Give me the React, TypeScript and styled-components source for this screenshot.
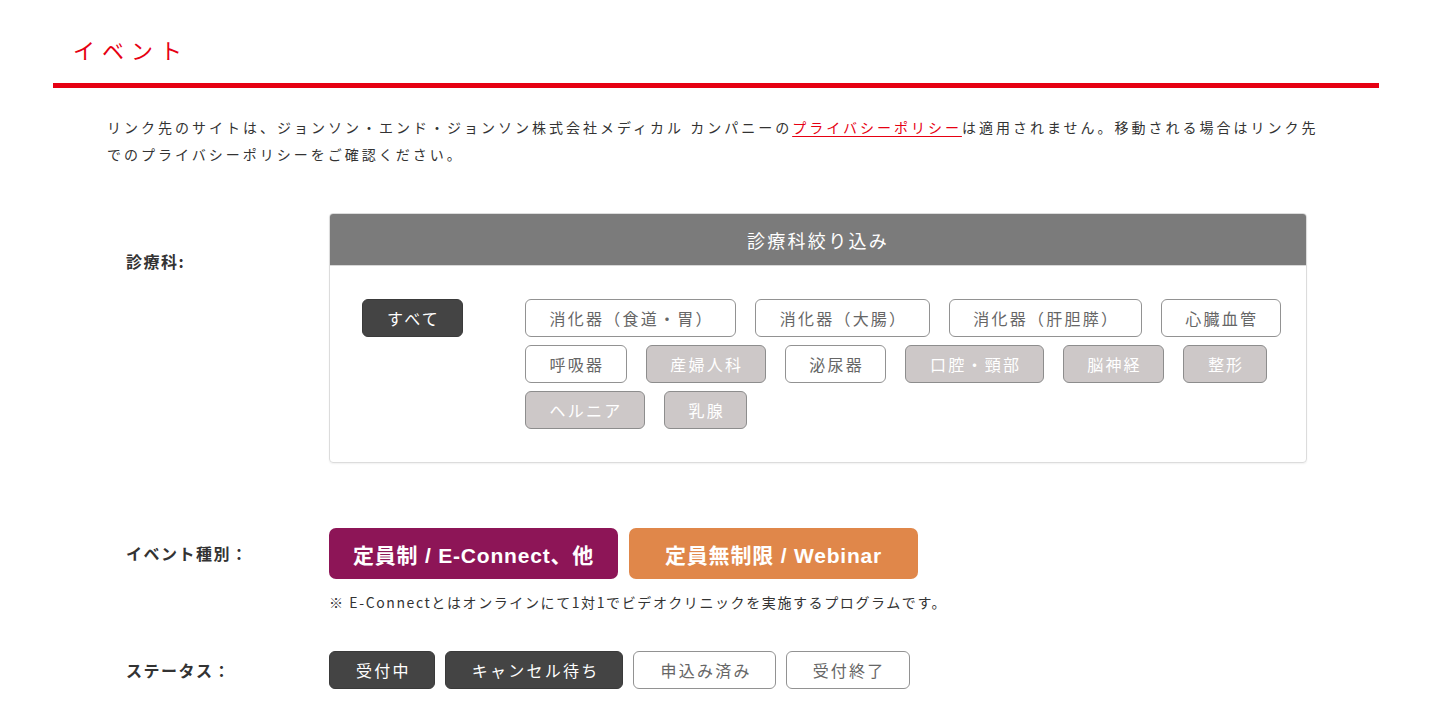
import React from "react";
import styled, { createGlobalStyle, css } from "styled-components";

const GlobalStyle = createGlobalStyle`
  html, body {
    margin: 0;
    padding: 0;
    background: #ffffff;
  }
  body {
    font-family: "Liberation Sans", "Noto Sans CJK JP", sans-serif;
    color: #333333;
  }
`;

const Page = styled.div`
  width: 1326px;
  margin-left: 53px;
  padding-bottom: 40px;
`;

const Title = styled.h1`
  margin: 0;
  padding: 33px 0 0 20px;
  font-family: "Noto Sans CJK JP", sans-serif;
  font-size: 22px;
  line-height: 32px;
  font-weight: 400;
  letter-spacing: 7px;
  color: #e60012;
`;

const RedRule = styled.div`
  margin-top: 18px;
  height: 5px;
  background: #e60012;
`;

const Notice = styled.p`
  margin: 26px 0 0;
  padding: 0 20px 0 54px;
  font-family: "Noto Sans CJK JP", sans-serif;
  font-size: 14px;
  line-height: 27px;
  letter-spacing: 3px;
  color: #333333;
  white-space: nowrap;
`;

const PolicyLink = styled.a`
  color: #e60012;
  text-decoration: underline;
  text-underline-offset: 3px;
`;

const FormRow = styled.div<{ $top: number }>`
  display: grid;
  grid-template-columns: 203px 1fr;
  padding-left: 73px;
  margin-top: ${(p) => p.$top}px;
`;

const RowLabel = styled.div<{ $lh: number; $pt?: number }>`
  font-family: "Noto Sans CJK JP", sans-serif;
  font-size: 16px;
  font-weight: 700;
  letter-spacing: 1.5px;
  color: #333333;
  line-height: ${(p) => p.$lh}px;
  padding-top: ${(p) => p.$pt ?? 0}px;
`;

const Panel = styled.div`
  width: 978px;
  box-sizing: border-box;
  border: 1px solid #dcdcdc;
  border-radius: 4px;
  overflow: hidden;
  box-shadow: 0 1px 2px rgba(0, 0, 0, 0.06);
`;

const PanelHeader = styled.div`
  height: 51px;
  background: #7b7b7b;
  color: #ffffff;
  display: flex;
  align-items: center;
  justify-content: center;
  font-family: "Noto Sans CJK JP", sans-serif;
  font-size: 18px;
  letter-spacing: 2.3px;
  border-bottom: 1px solid #d8d8d8;
`;

const PanelBody = styled.div`
  display: flex;
  align-items: flex-start;
  padding: 33px 10px 33px 32px;
`;

const pillBase = css`
  box-sizing: border-box;
  height: 38px;
  display: inline-flex;
  align-items: center;
  justify-content: center;
  font-family: "Noto Sans CJK JP", sans-serif;
  font-size: 16px;
  letter-spacing: 0.14em;
  border-radius: 6px;
  white-space: nowrap;
  cursor: pointer;
`;

const AllButton = styled.div`
  ${pillBase};
  width: 101px;
  margin-right: 62px;
  background: #444444;
  border: 1px solid #3a3a3a;
  color: #ffffff;
  padding-left: 2px;
`;

const TagList = styled.div`
  flex: 1;
  display: flex;
  flex-wrap: wrap;
  gap: 8px 19px;
`;

const Tag = styled.div<{ $disabled?: boolean }>`
  ${pillBase};
  padding: 0 21.5px 0 23.5px;
  background: ${(p) => (p.$disabled ? "#cdc8c8" : "#ffffff")};
  border: 1px solid ${(p) => (p.$disabled ? "#8d8d8d" : "#929292")};
  color: ${(p) => (p.$disabled ? "#ffffff" : "#666666")};
`;

const EventField = styled.div`
  display: flex;
  flex-direction: column;
`;

const ButtonRow = styled.div<{ $gap: number }>`
  display: flex;
  gap: ${(p) => p.$gap}px;
`;

const TypeButton = styled.div<{ $color: string }>`
  box-sizing: border-box;
  width: 289px;
  height: 51px;
  border-radius: 7px;
  background: ${(p) => p.$color};
  color: #ffffff;
  display: flex;
  align-items: center;
  justify-content: center;
  font-family: "Liberation Sans", "Noto Sans CJK JP", sans-serif;
  font-size: 21px;
  font-weight: 700;
  letter-spacing: 0.8px;
  cursor: pointer;
`;

const Note = styled.p`
  margin: 13px 0 0;
  font-family: "Noto Sans CJK JP", sans-serif;
  font-size: 14px;
  line-height: 20px;
  letter-spacing: 1.6px;
  color: #333333;
`;

const StatusButton = styled.div<{ $active?: boolean }>`
  ${pillBase};
  padding: 0 23px 0 26px;
  background: ${(p) => (p.$active ? "#444444" : "#ffffff")};
  border: 1px solid ${(p) => (p.$active ? "#3a3a3a" : "#929292")};
  color: ${(p) => (p.$active ? "#ffffff" : "#666666")};
`;

const tags: { label: string; disabled?: boolean }[] = [
  { label: "消化器（食道・胃）" },
  { label: "消化器（大腸）" },
  { label: "消化器（肝胆膵）" },
  { label: "心臓血管" },
  { label: "呼吸器" },
  { label: "産婦人科", disabled: true },
  { label: "泌尿器" },
  { label: "口腔・頸部", disabled: true },
  { label: "脳神経", disabled: true },
  { label: "整形", disabled: true },
  { label: "ヘルニア", disabled: true },
  { label: "乳腺", disabled: true },
];

const statuses: { label: string; active?: boolean }[] = [
  { label: "受付中", active: true },
  { label: "キャンセル待ち", active: true },
  { label: "申込み済み" },
  { label: "受付終了" },
];

export default function App() {
  return (
    <>
      <GlobalStyle />
      <Page>
        <Title>イベント</Title>
        <RedRule />
        <Notice>
          リンク先のサイトは、ジョンソン・エンド・ジョンソン株式会社メディカル カンパニーの
          <PolicyLink href="#">プライバシーポリシー</PolicyLink>
          は適用されません。移動される場合はリンク先
          <br />
          でのプライバシーポリシーをご確認ください。
        </Notice>

        <FormRow $top={45}>
          <RowLabel $lh={24} $pt={36}>
            診療科:
          </RowLabel>
          <Panel>
            <PanelHeader>診療科絞り込み</PanelHeader>
            <PanelBody>
              <AllButton>すべて</AllButton>
              <TagList>
                {tags.map((t) => (
                  <Tag key={t.label} $disabled={t.disabled}>
                    {t.label}
                  </Tag>
                ))}
              </TagList>
            </PanelBody>
          </Panel>
        </FormRow>

        <FormRow $top={65}>
          <RowLabel $lh={51}>イベント種別：</RowLabel>
          <EventField>
            <ButtonRow $gap={11}>
              <TypeButton $color="#8d1557">定員制 / E-Connect、他</TypeButton>
              <TypeButton $color="#e0874a">定員無制限 / Webinar</TypeButton>
            </ButtonRow>
            <Note>
              ※ E-Connectとはオンラインにて1対1でビデオクリニックを実施するプログラムです。
            </Note>
          </EventField>
        </FormRow>

        <FormRow $top={39}>
          <RowLabel $lh={38}>ステータス：</RowLabel>
          <ButtonRow $gap={10}>
            {statuses.map((s) => (
              <StatusButton key={s.label} $active={s.active}>
                {s.label}
              </StatusButton>
            ))}
          </ButtonRow>
        </FormRow>
      </Page>
    </>
  );
}
